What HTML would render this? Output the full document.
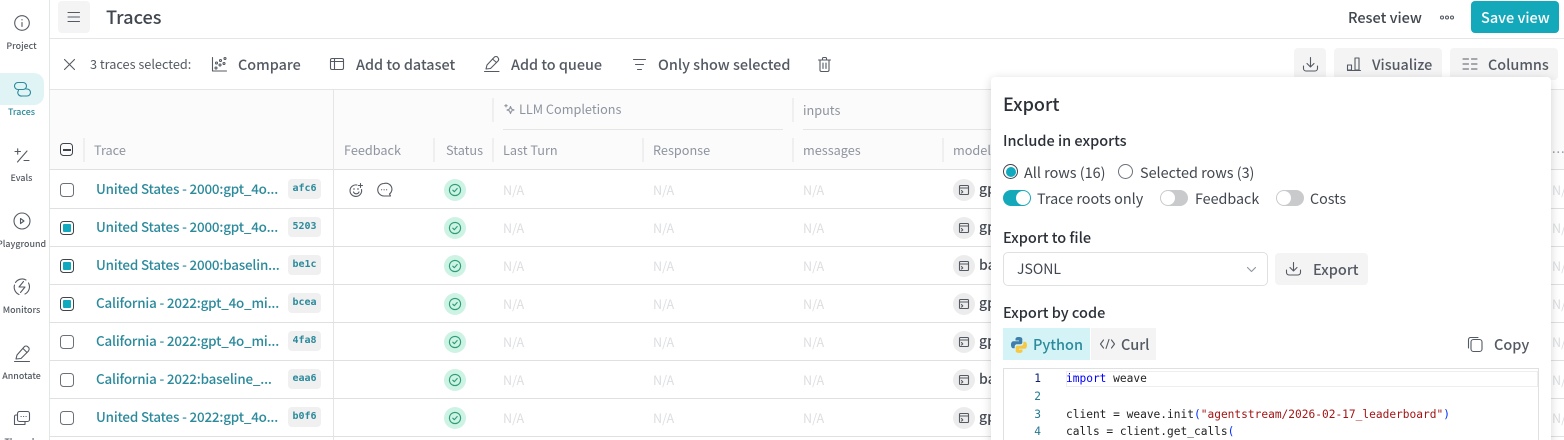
<!DOCTYPE html>
<html><head><meta charset="utf-8">
<style>
html,body{margin:0;padding:0;background:#fff;overflow:hidden}
body{width:1564px;height:440px;position:relative;font-family:"Noto Sans CJK JP","Liberation Sans",sans-serif;color:#545a63}
.t{position:absolute;white-space:nowrap;line-height:20px}
.a{position:absolute}
svg{position:absolute;fill:none;stroke:#545a63;stroke-width:1.1;stroke-linecap:round;stroke-linejoin:round;overflow:visible}
.nl{position:absolute;left:-3px;width:49px;text-align:center;font-size:8.9px;line-height:14px;font-weight:500;color:#545a63;white-space:nowrap}
.tb{font-size:14.4px;font-weight:500;color:#545a63;top:55px}
.h{font-size:12.7px;color:#8e949e;top:140px}
.hl{position:absolute;width:2px;background:#efefef}
.r{position:absolute;left:50px;width:1514px;height:37px;border-bottom:1px solid #dfe0e2}
.l{position:absolute;left:46px;top:7px;font-size:13.4px;letter-spacing:-.17px;line-height:20px;font-weight:500;color:#2b8a9b;white-space:nowrap}
.g{position:absolute;left:238px;top:8px;width:33px;height:20px;background:#f0f0f0;border-radius:4px;font:bold 10px/20px "DejaVu Sans Mono",monospace;color:#2b8a9b;text-align:center}
.c{position:absolute;left:10px;top:12px;width:12px;height:12px;border:1.2px solid #6b7079;border-radius:3.5px}
.s{position:absolute;left:394px;top:8px;width:22px;height:22px;border-radius:50%;background:#cdf3e4}
.n{position:absolute;top:9px;font-size:12.6px;line-height:20px;color:#dcdee1}
.m{position:absolute;left:903px;top:8px;width:22px;height:22px;border-radius:50%;background:#ececec}
.ck{background:#fff;border-color:#3f444c}
.ck:after{content:"";position:absolute;left:2px;top:2px;width:8px;height:8px;background:#10a9bd;border-radius:1px}
.mo{position:absolute;left:929px;top:8px;font-size:14px;line-height:20px;font-weight:500;color:#454b54}
.tg{position:absolute;width:28px;height:16px;border-radius:8px;background:#c9cacc}
.tg:after{content:"";position:absolute;left:1px;top:1px;width:14px;height:14px;border-radius:50%;background:#fff}
.tg.on:after{left:13px}
.ln{position:absolute;left:1003px;width:38px;text-align:right;font:11.2px/18px "DejaVu Sans Mono",monospace;color:#237893;box-sizing:border-box}
.cd{position:absolute;left:1066px;font:11.2px/18px "DejaVu Sans Mono",monospace;color:#222;white-space:pre}
</style></head><body>

<div class="a" style="left:49px;top:0;width:1px;height:440px;background:#e4e5e7"></div>
<div class="a" style="left:50px;top:38px;width:1514px;height:1px;background:#e4e5e7"></div>
<div class="a" style="left:50px;top:89px;width:1514px;height:1px;background:#e4e5e7"></div>
<div class="a" style="left:50px;top:90px;width:1514px;height:79px;background:#fbfbfb"></div>
<div class="a" style="left:50px;top:169px;width:1514px;height:1px;background:#dfe0e2"></div>

<!-- top bar -->
<div class="a" style="left:58px;top:1px;width:32px;height:32px;background:#f4f4f5;border-radius:4px"></div>
<svg style="left:68px;top:12px" width="12" height="10"><path d="M0 .5H11.5M0 5H11.5M0 9.5H11.5"/></svg>
<div class="t" style="left:106px;top:7px;font-size:18.2px;font-weight:500;color:#41474f">Traces</div>
<div class="t" style="left:1348px;top:8px;font-size:14.5px;font-weight:500;color:#41474f">Reset view</div>
<svg style="left:1440px;top:15px" width="14" height="6" stroke-width=".9"><circle cx="2" cy="2.5" r="1.5"/><circle cx="7" cy="2.5" r="1.5"/><circle cx="12" cy="2.5" r="1.5"/></svg>
<div class="a" style="left:1471px;top:1px;width:88px;height:32px;background:#13a9ba;border-radius:4px"></div>
<div class="t" style="left:1481px;top:8px;font-size:14.5px;font-weight:500;color:#fff">Save view</div>

<!-- sidebar -->
<svg style="left:14px;top:16px" width="16" height="16"><circle cx="8" cy="7" r="7.3"/><path d="M8 6.5V10.5M8 3.6V4"/></svg>
<div class="nl" style="top:39px">Project</div>
<div class="a" style="left:0;top:73px;width:44px;height:32px;background:#e0f4f6;border-radius:0 10px 10px 0"></div>
<svg style="left:14px;top:82px;stroke:#2b8a9b" width="16" height="14"><rect x=".5" y=".5" width="12" height="7" rx="3.5"/><path d="M4.500 8.500A3.500 3.500 0 0 0 8 14H13A3.500 3.500 0 0 0 13 7H12"/></svg>
<div class="nl" style="top:105px;color:#2b8a9b">Traces</div>
<svg style="left:15px;top:148px" width="14" height="14"><path d="M0 3.500H5.500M2.700 .8V6.200M12 3 2.500 14M9 12.500H14"/></svg>
<div class="nl" style="top:171px">Evals</div>
<svg style="left:13px;top:213px" width="18" height="18" stroke-width="1.1"><circle cx="9" cy="8" r="8"/><path d="M7.5 5.5 11 8 7.5 10.500Z"/></svg>
<div class="nl" style="top:237px">Playground</div>
<svg style="left:13px;top:278px" width="18" height="18"><path d="M2.500 4.500A8 8 0 0 1 13 2M15.500 5A8 8 0 0 1 12 16M1.500 7A8 8 0 0 0 6 16.500"/><path d="M10.500 3.500 6 9H12L7.500 14.500"/></svg>
<div class="nl" style="top:303px">Monitors</div>
<svg style="left:14px;top:345px" width="16" height="17"><path d="M.5 16.500H15.500M2 14 3 10 10.500 1.500Q12 .5 13.500 1.500L15 3Q15.500 4.500 14.500 6L7 13.500Z"/><path d="M9 3.500 13 7.500"/></svg>
<div class="nl" style="top:369px">Annotate</div>
<svg style="left:14px;top:411px" width="16" height="16"><rect x="3.500" y=".5" width="12" height="10" rx="2"/><path d="M3.500 4H2A1.500 1.500 0 0 0 .5 5.500V13.500H11V10.500M7 5.500H7.200M9.500 5.500H9.700M12 5.500H12.200"/></svg>
<div class="nl" style="top:435px">Threads</div>

<!-- toolbar -->
<svg style="left:64px;top:59px" width="11" height="11"><path d="M.5 .5 10.500 10.500M10.500 .5 .5 10.500"/></svg>
<div class="t" style="left:90px;top:54px;font-size:12.7px;color:#545a63">3 traces selected:</div>
<svg style="left:212px;top:57px" width="15" height="15"><path d="M.5 .5V14H14.500"/><circle cx="4" cy="11" r="1"/><circle cx="4.500" cy="6" r="1"/><circle cx="8" cy="8" r="1"/><circle cx="8.500" cy="3.500" r="1"/><circle cx="12" cy="6.500" r="1"/><circle cx="13" cy="1.500" r="1"/></svg>
<div class="t tb" style="left:238px">Compare</div>
<svg style="left:330px;top:58px" width="14" height="12"><rect x=".5" y=".5" width="13" height="11" rx="1.500"/><path d="M.5 3.500H13.500M4.500 .5V11.500"/></svg>
<div class="t tb" style="left:356px">Add to dataset</div>
<svg style="left:484px;top:56px" width="16" height="16"><path d="M.5 15.500H15M2 13 3 9 10.500 1Q12 0 13.500 1L14.500 2.500Q15 4 14 5L6.500 12.500Z"/><path d="M8.500 3 12.500 6.500"/></svg>
<div class="t tb" style="left:511px">Add to queue</div>
<svg style="left:633px;top:59px" width="13" height="11"><path d="M.5 .5H12.500M2.500 5.500H10.500M4.500 10.500H8.500"/></svg>
<div class="t tb" style="left:658px">Only show selected</div>
<svg style="left:818px;top:57px" width="13" height="15"><path d="M.5 3H12.500M2 3V13A1.500 1.500 0 0 0 3.500 14.500H9.500A1.500 1.500 0 0 0 11 13V3M4.500 3V1.500A1 1 0 0 1 5.500 .5H7.500A1 1 0 0 1 8.500 1.500V3M5 6V11.500M8 6V11.500"/></svg>

<div class="a" style="left:1294px;top:48px;width:32px;height:32px;background:#f4f4f5;border-radius:4px"></div>
<svg style="left:1303px;top:57px" width="15" height="15"><path d="M7.500 .5V10M4 6.500 7.500 10 11 6.500M.5 9V11.500A2.500 2.500 0 0 0 3 14H12A2.500 2.500 0 0 0 14.500 11.500V9"/></svg>
<div class="a" style="left:1334px;top:48px;width:108px;height:32px;background:#f4f4f5;border-radius:4px"></div>
<svg style="left:1347px;top:57px" width="14" height="14"><rect x=".5" y="8" width="4" height="5"/><rect x="8" y="1" width="4" height="12"/><path d="M.5 13.500H13.500"/></svg>
<div class="t tb" style="left:1372px">Visualize</div>
<div class="a" style="left:1450px;top:48px;width:108px;height:32px;background:#f4f4f5;border-radius:4px"></div>
<svg style="left:1463px;top:58px" width="14" height="12"><path d="M0 1H5.500M8.500 1H14M0 6H5.500M8.500 6H14M0 11H5.500M8.500 11H14"/></svg>
<div class="t tb" style="left:1488px">Columns</div>

<!-- header -->
<div class="a" style="left:333px;top:90px;width:1px;height:350px;background:#e4e5e7"></div>
<div class="hl" style="left:83px;top:138px;height:24px"></div>
<div class="hl" style="left:433px;top:138px;height:24px"></div>
<div class="hl" style="left:492px;top:98px;height:24px"></div>
<div class="hl" style="left:492px;top:138px;height:24px"></div>
<div class="hl" style="left:642px;top:138px;height:24px"></div>
<div class="hl" style="left:792px;top:98px;height:24px"></div>
<div class="hl" style="left:792px;top:138px;height:24px"></div>
<div class="hl" style="left:942px;top:138px;height:24px"></div>
<div class="a" style="left:503px;top:129px;width:280px;height:1px;background:#e4e5e7"></div>
<div class="a" style="left:803px;top:129px;width:190px;height:1px;background:#e4e5e7"></div>
<div class="a" style="left:60px;top:143px;width:11px;height:11px;border:1.5px solid #3f444c;border-radius:3.5px"></div>
<div class="a" style="left:63px;top:149px;width:8px;height:1.500px;background:#3f444c"></div>
<div class="t h" style="left:94px">Trace</div>
<div class="t h" style="left:344px">Feedback</div>
<div class="t h" style="left:446px">Status</div>
<svg style="left:504px;top:104px;stroke:#8e949e" width="11" height="11" stroke-width=".9"><path d="M6.500 2.500 7.500 5 10 6 7.500 7 6.500 9.500 5.500 7 3 6 5.500 5ZM2 .5V3M.8 1.700H3.200"/></svg>
<div class="t h" style="left:519px;top:99px">LLM Completions</div>
<div class="t h" style="left:503px">Last Turn</div>
<div class="t h" style="left:653px">Response</div>
<div class="t h" style="left:803px;top:100px">inputs</div>
<div class="t h" style="left:803px">messages</div>
<div class="t h" style="left:953px">model</div>
<div class="t h" style="left:1552px;top:138px;letter-spacing:1px">...</div>

<!-- rows -->
<div class="r" style="top:171px">
<div class="c"></div><div class="l">United States - 2000:gpt_4o...</div><div class="g">afc6</div>
<svg style="left:300px;top:12px" width="15" height="15"><path d="M11.500 6.500A5.800 5.800 0 1 1 7 2M3.500 6H4.500M3.500 9A3 3 0 0 0 9 9M10.500 .5V4.500M8.500 2.500H12.500"/><circle cx="8" cy="6" r=".3"/></svg>
<svg style="left:327px;top:12px" width="14" height="14"><path d="M7 .5A6 6 0 1 0 7 13H13.500L12.500 11A6 6 0 0 0 7 .5Z"/><path d="M4.500 6.800H4.700M7 6.800H7.200M9.500 6.800H9.700"/></svg>
<div class="s"><svg style="left:5px;top:5px;stroke:#2e9a78" width="12" height="12"><circle cx="6" cy="6" r="5.600"/><path d="M3.800 6.200 5.300 7.700 8.200 4.500"/></svg></div>
<div class="n" style="left:453px">N/A</div><div class="n" style="left:603px">N/A</div><div class="n" style="left:753px">N/A</div>
<div class="m"><svg style="left:6px;top:6px" width="10" height="10" stroke-width=".9"><rect x=".5" y=".5" width="9" height="9" rx="1"/><path d="M.5 3H9.500M2.500 5.500 3.800 7 2.500 8"/></svg></div><div class="mo">gpt</div>
</div>
<div class="r" style="top:209px">
<div class="c ck"></div><div class="l">United States - 2000:gpt_4o...</div><div class="g">5203</div>
<div class="s"><svg style="left:5px;top:5px;stroke:#2e9a78" width="12" height="12"><circle cx="6" cy="6" r="5.600"/><path d="M3.800 6.200 5.300 7.700 8.200 4.500"/></svg></div>
<div class="n" style="left:453px">N/A</div><div class="n" style="left:603px">N/A</div><div class="n" style="left:753px">N/A</div>
<div class="m"><svg style="left:6px;top:6px" width="10" height="10" stroke-width=".9"><rect x=".5" y=".5" width="9" height="9" rx="1"/><path d="M.5 3H9.500M2.500 5.500 3.800 7 2.500 8"/></svg></div><div class="mo">gpt</div>
</div>
<div class="r" style="top:247px">
<div class="c ck"></div><div class="l">United States - 2000:baselin...</div><div class="g">be1c</div>
<div class="s"><svg style="left:5px;top:5px;stroke:#2e9a78" width="12" height="12"><circle cx="6" cy="6" r="5.600"/><path d="M3.800 6.200 5.300 7.700 8.200 4.500"/></svg></div>
<div class="n" style="left:453px">N/A</div><div class="n" style="left:603px">N/A</div><div class="n" style="left:753px">N/A</div>
<div class="m"><svg style="left:6px;top:6px" width="10" height="10" stroke-width=".9"><rect x=".5" y=".5" width="9" height="9" rx="1"/><path d="M.5 3H9.500M2.500 5.500 3.800 7 2.500 8"/></svg></div><div class="mo">bas</div>
</div>
<div class="r" style="top:285px">
<div class="c ck"></div><div class="l">California - 2022:gpt_4o_mi...</div><div class="g">bcea</div>
<div class="s"><svg style="left:5px;top:5px;stroke:#2e9a78" width="12" height="12"><circle cx="6" cy="6" r="5.600"/><path d="M3.800 6.200 5.300 7.700 8.200 4.500"/></svg></div>
<div class="n" style="left:453px">N/A</div><div class="n" style="left:603px">N/A</div><div class="n" style="left:753px">N/A</div>
<div class="m"><svg style="left:6px;top:6px" width="10" height="10" stroke-width=".9"><rect x=".5" y=".5" width="9" height="9" rx="1"/><path d="M.5 3H9.500M2.500 5.500 3.800 7 2.500 8"/></svg></div><div class="mo">gpt</div>
</div>
<div class="r" style="top:323px">
<div class="c"></div><div class="l">California - 2022:gpt_4o_mi...</div><div class="g">4fa8</div>
<div class="s"><svg style="left:5px;top:5px;stroke:#2e9a78" width="12" height="12"><circle cx="6" cy="6" r="5.600"/><path d="M3.800 6.200 5.300 7.700 8.200 4.500"/></svg></div>
<div class="n" style="left:453px">N/A</div><div class="n" style="left:603px">N/A</div><div class="n" style="left:753px">N/A</div>
<div class="m"><svg style="left:6px;top:6px" width="10" height="10" stroke-width=".9"><rect x=".5" y=".5" width="9" height="9" rx="1"/><path d="M.5 3H9.500M2.500 5.500 3.800 7 2.500 8"/></svg></div><div class="mo">gpt</div>
</div>
<div class="r" style="top:361px">
<div class="c"></div><div class="l">California - 2022:baseline_...</div><div class="g">eaa6</div>
<div class="s"><svg style="left:5px;top:5px;stroke:#2e9a78" width="12" height="12"><circle cx="6" cy="6" r="5.600"/><path d="M3.800 6.200 5.300 7.700 8.200 4.500"/></svg></div>
<div class="n" style="left:453px">N/A</div><div class="n" style="left:603px">N/A</div><div class="n" style="left:753px">N/A</div>
<div class="m"><svg style="left:6px;top:6px" width="10" height="10" stroke-width=".9"><rect x=".5" y=".5" width="9" height="9" rx="1"/><path d="M.5 3H9.500M2.500 5.500 3.800 7 2.500 8"/></svg></div><div class="mo">bas</div>
</div>
<div class="r" style="top:399px">
<div class="c"></div><div class="l">United States - 2022:gpt_4o...</div><div class="g">b0f6</div>
<div class="s"><svg style="left:5px;top:5px;stroke:#2e9a78" width="12" height="12"><circle cx="6" cy="6" r="5.600"/><path d="M3.800 6.200 5.300 7.700 8.200 4.500"/></svg></div>
<div class="n" style="left:453px">N/A</div><div class="n" style="left:603px">N/A</div><div class="n" style="left:753px">N/A</div>
<div class="m"><svg style="left:6px;top:6px" width="10" height="10" stroke-width=".9"><rect x=".5" y=".5" width="9" height="9" rx="1"/><path d="M.5 3H9.500M2.500 5.500 3.800 7 2.500 8"/></svg></div><div class="mo">gpt</div>
</div>
<div class="n" style="position:absolute;left:1552px;top:180px">N/A</div>
<div class="n" style="position:absolute;left:1552px;top:218px">N/A</div>
<div class="n" style="position:absolute;left:1552px;top:256px">N/A</div>
<div class="n" style="position:absolute;left:1552px;top:294px">N/A</div>
<div class="n" style="position:absolute;left:1552px;top:332px">N/A</div>
<div class="n" style="position:absolute;left:1552px;top:370px">N/A</div>
<div class="n" style="position:absolute;left:1552px;top:408px">N/A</div>

<!-- modal -->
<div class="a" style="left:991px;top:77px;width:560px;height:380px;background:#fff;border-radius:4px;box-shadow:0 2px 10px rgba(0,0,0,.16)"></div>
<div class="t" style="left:1003px;top:93px;font-size:18px;line-height:22px;font-weight:500;color:#2b3038">Export</div>
<div class="t" style="left:1003px;top:131px;font-size:14.500px;font-weight:500;color:#2b3038">Include in exports</div>

<div class="a" style="left:1003px;top:164px;width:13px;height:13px;border:1.200px solid #3f444c;border-radius:50%"></div>
<div class="a" style="left:1005.600px;top:166.600px;width:10px;height:10px;background:#10a9bd;border-radius:50%"></div>
<div class="t" style="left:1024px;top:163px;font-size:14.400px;color:#41474f">All rows (16)</div>
<div class="a" style="left:1118px;top:164px;width:13px;height:13px;border:1.200px solid #6b7079;border-radius:50%"></div>
<div class="t" style="left:1140px;top:163px;font-size:14.400px;color:#41474f">Selected rows (3)</div>

<div class="tg on" style="left:1003px;top:190px;background:#13a9ba"></div>
<div class="t" style="left:1037px;top:189px;font-size:14.400px;color:#41474f">Trace roots only</div>
<div class="tg" style="left:1160px;top:190px"></div>
<div class="t" style="left:1195px;top:189px;font-size:14.300px;color:#41474f">Feedback</div>
<div class="tg" style="left:1276px;top:190px"></div>
<div class="t" style="left:1310px;top:189px;font-size:14.300px;color:#41474f">Costs</div>

<div class="t" style="left:1003px;top:228px;font-size:14.500px;font-weight:500;color:#2b3038">Export to file</div>
<div class="a" style="left:1003px;top:252px;width:263px;height:32px;border:1px solid #dfe0e2;border-radius:5px"></div>
<div class="t" style="left:1017px;top:259px;font-size:14px;color:#41474f">JSONL</div>
<svg style="left:1247px;top:267px;stroke:#8e949e" width="9" height="5"><path d="M.5 .5 4.500 4.500 8.500 .5"/></svg>
<div class="a" style="left:1275px;top:253px;width:93px;height:32px;background:#f4f4f5;border-radius:4px"></div>
<svg style="left:1286px;top:262px" width="15" height="14"><path d="M7.500 .5V9M4 5.500 7.500 9 11 5.500M.5 8V10.500A2.500 2.500 0 0 0 3 13H12A2.500 2.500 0 0 0 14.500 10.500V8"/></svg>
<div class="t" style="left:1313px;top:260px;font-size:14.500px;font-weight:500;color:#545a63">Export</div>

<div class="t" style="left:1003px;top:303px;font-size:14.500px;font-weight:500;color:#2b3038">Export by code</div>
<div class="a" style="left:1003px;top:328px;width:87px;height:32px;background:#d4f3f7"></div>
<svg style="left:1011px;top:337px;stroke:none" width="16" height="16"><path fill="#3d7eaa" d="M7.700 0C4.800 0 4.500 1.200 4.500 2V3.500H8V4.200H2.500C1 4.200 0 5.500 0 7.800 0 10 1 11.300 2.300 11.300H3.700V9.500C3.700 8.300 4.700 7.300 6 7.300H9.500C10.500 7.300 11.300 6.500 11.300 5.500V2C11.300 .7 9.800 0 7.700 0Z"/><path fill="#f6c945" d="M8.300 16C11.200 16 11.500 14.800 11.500 14V12.500H8V11.800H13.500C15 11.800 16 10.500 16 8.200 16 6 15 4.700 13.700 4.700H12.300V6.500C12.300 7.700 11.300 8.700 10 8.700H6.500C5.500 8.700 4.700 9.500 4.700 10.500V14C4.700 15.300 6.200 16 8.300 16Z"/></svg>
<div class="t" style="left:1033px;top:335px;font-size:14.500px;font-weight:500;color:#2b8a9b">Python</div>
<div class="a" style="left:1091px;top:328px;width:65px;height:32px;background:#f4f4f5"></div>
<svg style="left:1100px;top:339px" width="15" height="10"><path d="M3.500 1 .5 5 3.500 9M11.500 1 14.500 5 11.500 9M9 .5 6 9.500"/></svg>
<div class="t" style="left:1121px;top:335px;font-size:14.500px;font-weight:500;color:#545a63">Curl</div>
<svg style="left:1468px;top:337px" width="15" height="15"><rect x="3" y="2.500" width="11" height="12" rx="2.500"/><path d="M.5 11V2.500A2 2 0 0 1 2.500 .5H10"/></svg>
<div class="t" style="left:1494px;top:335px;font-size:14.500px;font-weight:500;color:#545a63">Copy</div>

<div class="a" style="left:1003px;top:368px;width:536px;height:80px;border:1px solid #dfe0e2;box-sizing:border-box"></div>
<div class="a" style="left:1066px;top:371px;width:472px;height:16px;border:1px solid #eeeeee;box-sizing:border-box"></div>
<div class="ln" style="top:370px;color:#0b216f">1</div>
<div class="ln" style="top:388px">2</div>
<div class="ln" style="top:406px">3</div>
<div class="ln" style="top:423px">4</div>
<div class="cd" style="top:370px"><span style="color:#0000ff">import</span> weave</div>
<div class="cd" style="top:406px">client = weave.init<span style="color:#0431fa">(</span><span style="color:#a31515">"agentstream/2026-02-17_leaderboard"</span><span style="color:#0431fa">)</span></div>
<div class="cd" style="top:423px">calls = client.get_calls<span style="color:#0431fa">(</span></div>

</body></html>
